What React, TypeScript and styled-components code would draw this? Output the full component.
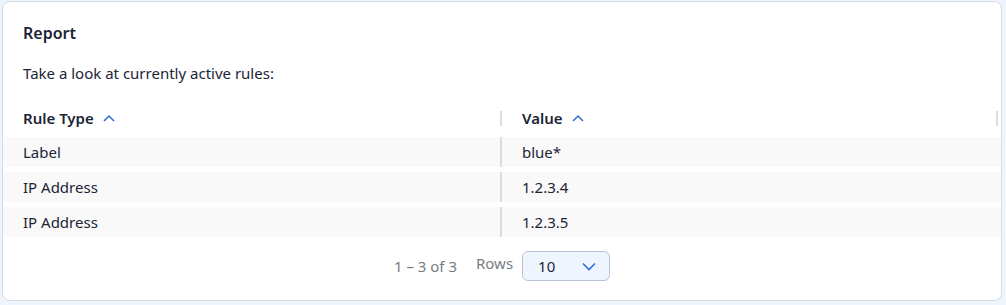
import React from 'react';
import styled, { createGlobalStyle } from 'styled-components';

const GlobalStyle = createGlobalStyle`
  html, body {
    margin: 0;
    padding: 0;
    background: #eef4fc;
  }
  body {
    font-family: 'Noto Sans', 'Open Sans', sans-serif;
    color: #1b2536;
  }
`;

const Page = styled.div`
  padding: 1px 4px 4px 2px;
`;

const Card = styled.section`
  background: #ffffff;
  border: 1px solid #d6dce6;
  border-radius: 8px;
  height: 300px;
  box-sizing: border-box;
  display: flex;
  flex-direction: column;
`;

const Title = styled.h2`
  margin: 0;
  padding: 20px 20px 0;
  font-size: 16px;
  font-weight: 600;
  line-height: 22px;
  color: #1b2536;
`;

const Intro = styled.p`
  margin: 0;
  padding: 19px 20px 0;
  font-size: 15px;
  line-height: 20px;
  color: #1b2536;
`;

const Table = styled.table`
  width: 100%;
  margin-top: 16px;
  border-collapse: separate;
  border-spacing: 0 5px;
  font-size: 15px;
  table-layout: fixed;
`;

const HeadCell = styled.th<{ $last?: boolean }>`
  text-align: left;
  font-weight: 600;
  height: 28px;
  padding: 0 0 0 20px;
  position: relative;
  color: #1b2536;

  &::after {
    content: '';
    position: absolute;
    right: ${p => (p.$last ? '3px' : '0')};
    top: 7px;
    width: 2px;
    height: 15px;
    background: #dcdcdc;
  }
`;

const Row = styled.tr`
  background: #f9f9f9;
`;

const Cell = styled.td<{ $divided?: boolean }>`
  height: 30px;
  padding: 0 0 0 20px;
  box-sizing: border-box;
  border-right: ${p => (p.$divided ? '2px solid #dcdcdc' : 'none')};
  color: #1b2536;
`;

const SortIcon = styled.svg`
  width: 12px;
  height: 8px;
  margin-left: 9px;
  vertical-align: 2px;
`;

const Footer = styled.div`
  display: flex;
  justify-content: center;
  align-items: center;
  gap: 19px;
  margin-top: 9px;
  font-size: 15px;
  color: #777c84;
`;

const RowsPicker = styled.label`
  display: flex;
  align-items: center;
  gap: 9px;
`;

const RowsLabel = styled.span`
  position: relative;
  top: -3px;
`;

const Select = styled.div`
  width: 88px;
  height: 30px;
  box-sizing: border-box;
  border: 1px solid #b9c4d4;
  border-radius: 6px;
  background: #eef5ff;
  display: flex;
  align-items: center;
  justify-content: space-between;
  padding: 0 13px 0 15px;
  color: #1b2536;
  font-size: 15px;
`;

const ChevronUp = () => (
  <SortIcon viewBox="0 0 12 8" fill="none">
    <path d="M1 7l5-5 5 5" stroke="#2a6fd6" strokeWidth="1.5" />
  </SortIcon>
);

const ChevronDown = () => (
  <svg width="14" height="9" viewBox="0 0 14 9" fill="none">
    <path d="M1 1.5l6 6 6-6" stroke="#2a6fd6" strokeWidth="1.6" />
  </svg>
);

const rules = [
  { type: 'Label', value: 'blue*' },
  { type: 'IP Address', value: '1.2.3.4' },
  { type: 'IP Address', value: '1.2.3.5' },
];

const App: React.FC = () => (
  <Page>
    <GlobalStyle />
    <Card>
      <Title>Report</Title>
      <Intro>Take a look at currently active rules:</Intro>
      <Table>
        <thead>
          <tr>
            <HeadCell>
              Rule Type
              <ChevronUp />
            </HeadCell>
            <HeadCell $last>
              Value
              <ChevronUp />
            </HeadCell>
          </tr>
        </thead>
        <tbody>
          {rules.map((rule, i) => (
            <Row key={i}>
              <Cell $divided>{rule.type}</Cell>
              <Cell>{rule.value}</Cell>
            </Row>
          ))}
        </tbody>
      </Table>
      <Footer>
        <span>1 – 3 of 3</span>
        <RowsPicker>
          <RowsLabel>Rows</RowsLabel>
          <Select>
            <span>10</span>
            <ChevronDown />
          </Select>
        </RowsPicker>
      </Footer>
    </Card>
  </Page>
);

export default App;
